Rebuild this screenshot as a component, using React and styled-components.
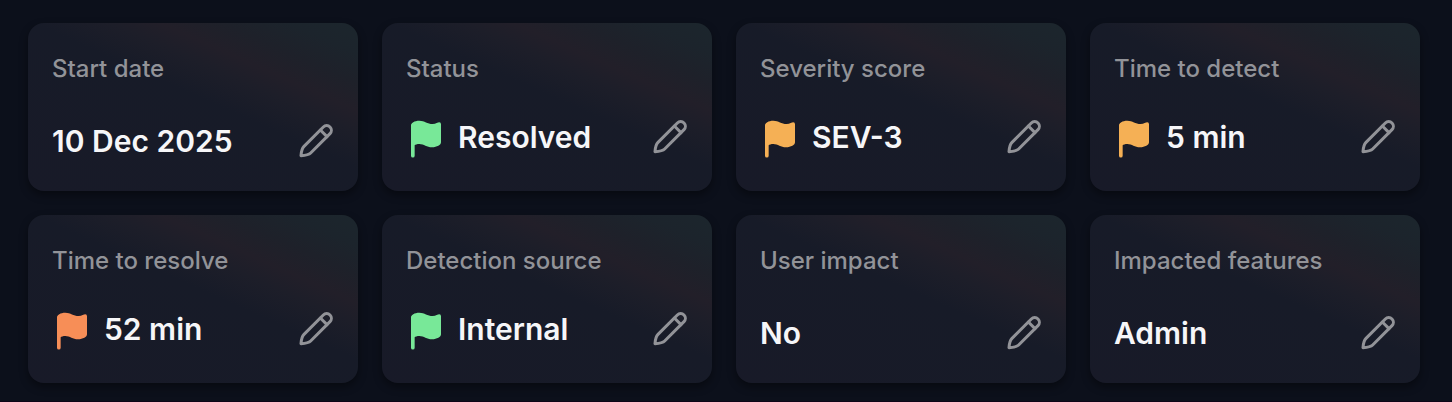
import React from "react";
import styled, { createGlobalStyle } from "styled-components";

const GlobalStyle = createGlobalStyle`
  * {
    box-sizing: border-box;
  }

  body {
    margin: 0;
    background-color: #0c101b;
    font-family: Inter, "Liberation Sans", sans-serif;
  }
`;

const Grid = styled.main`
  display: grid;
  grid-template-columns: repeat(4, 1fr);
  gap: 24px;
  padding: 23px 32px 18px 28px;
  border-bottom: 1px solid #0d0417;
`;

const Card = styled.section`
  display: flex;
  flex-direction: column;
  justify-content: space-between;
  min-height: 168px;
  padding: 24px;
  border-radius: 16px;
  background-color: #171a27;
  background-image: linear-gradient(24deg, #181a28 0%, #171b28 54%, #1d1e29 65%, #221f29 72%, #1e212a 81%, #1c242c 90%, #1c262d 100%);
  box-shadow: 0 4px 8px rgba(0, 0, 0, 0.4);
`;

const Label = styled.h2`
  margin: 0;
  color: #929398;
  font-size: 24px;
  font-weight: 500;
  line-height: 44px;
`;

const Row = styled.div`
  display: flex;
  align-items: center;
  gap: 12px;
  height: ${(props) => (props.$tall ? "60px" : "52px")};
`;

const Value = styled.p`
  flex: 1;
  margin: 0;
  color: #f6f6f8;
  font-size: 30px;
  font-weight: 600;
  line-height: 40px;
`;

const FlagIcon = styled.svg`
  width: 40px;
  height: 44px;
  fill: ${(props) => props.$color};
`;

const EditButton = styled.button`
  display: flex;
  padding: 0;
  border: none;
  background: none;
  color: #929398;
  cursor: pointer;
`;

const PencilIcon = styled.svg`
  width: 36px;
  height: 36px;
  fill: none;
  stroke: currentColor;
  stroke-width: 9;
  stroke-linecap: round;
  stroke-linejoin: round;
`;

const green = "#78e898";
const amber = "#f5b055";
const orange = "#f78e57";

const fields = [
  { label: "Start date", value: "10 Dec 2025" },
  { label: "Status", value: "Resolved", flag: green },
  { label: "Severity score", value: "SEV-3", flag: amber },
  { label: "Time to detect", value: "5 min", flag: amber },
  { label: "Time to resolve", value: "52 min", flag: orange },
  { label: "Detection source", value: "Internal", flag: green },
  { label: "User impact", value: "No" },
  { label: "Impacted features", value: "Admin" },
];

function Flag(props) {
  return (
    <FlagIcon $color={props.color} viewBox="0 0 120 132" aria-hidden="true">
      <path d="M15 31C15 24 25 17 40 17C56 17 64 27 80 27C90 27 95 22 100 22Q105 22 105 28V82C105 90 93 97 78 97C62 97 54 87 40 87C33 87 28 89 26 91V122A5.5 5.5 0 0 1 15 122Z" />
    </FlagIcon>
  );
}

function Pencil() {
  return (
    <PencilIcon viewBox="0 0 108 108" aria-hidden="true">
      <path d="M76 12A14 14 0 0 1 96 32L38 90C32 96 25 97 9 98C10 82 12 76 18 70Z" />
      <path d="M67 21L87 41" />
    </PencilIcon>
  );
}

function FieldCard(props) {
  return (
    <Card>
      <Label>{props.label}</Label>
      <Row $tall={!!props.flag}>
        {props.flag && <Flag color={props.flag} />}
        <Value>{props.value}</Value>
        <EditButton type="button" aria-label={"Edit " + props.label}>
          <Pencil />
        </EditButton>
      </Row>
    </Card>
  );
}

function App() {
  return (
    <React.Fragment>
      <GlobalStyle />
      <Grid>
        {fields.map((field) => (
          <FieldCard key={field.label} label={field.label} value={field.value} flag={field.flag} />
        ))}
      </Grid>
    </React.Fragment>
  );
}

export default App;
